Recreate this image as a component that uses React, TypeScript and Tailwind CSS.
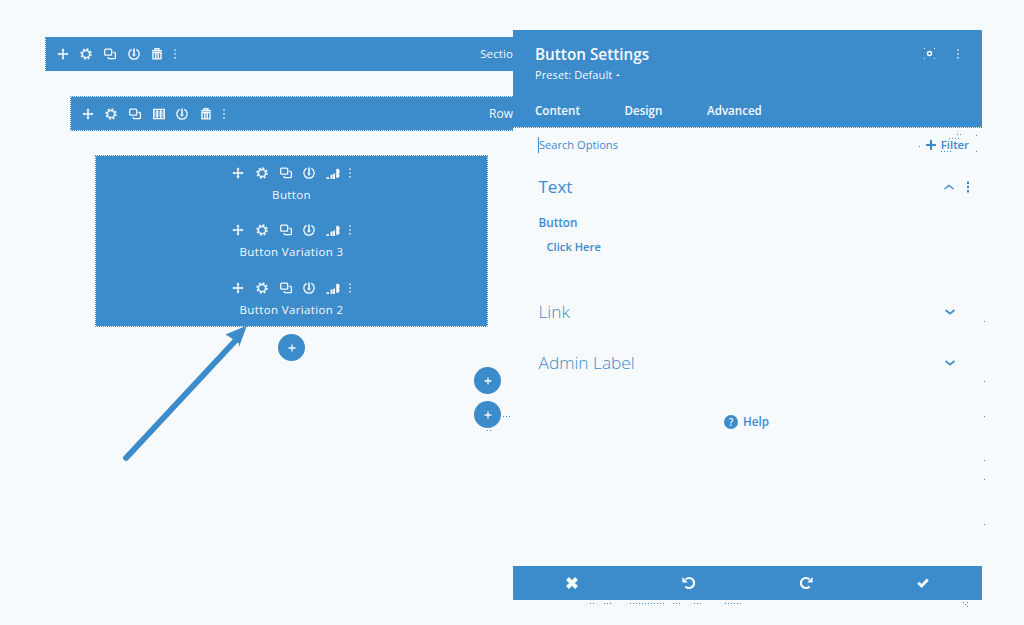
import React from "react";

type IconName = "move" | "gear" | "copy" | "columns" | "power" | "trash" | "bars" | "dots";

const shapes: Record<IconName, React.ReactNode> = {
  move: (
    <g fill="currentColor">
      <path d="M5.25 1.5h1.5v9h-1.5zM1.5 5.25h9v1.5h-9z" />
      <path d="M6 .3 7.6 2.6H4.4zM6 11.7 4.4 9.4h3.2zM.3 6 2.6 4.4v3.2zM11.7 6 9.4 7.6V4.4z" />
    </g>
  ),
  gear: (
    <g fill="none" stroke="currentColor">
      <circle cx="6" cy="6" r="3.6" strokeWidth="1.5" />
      <circle cx="6" cy="6" r="5" strokeWidth="1.5" strokeDasharray="1.96 1.96" />
    </g>
  ),
  copy: (
    <g fill="none" stroke="currentColor" strokeWidth="1.3">
      <rect x=".7" y="1.2" width="7" height="6" rx="1" />
      <path d="M9.2 4.4h1.2q1 0 1 1v4.3q0 1-1 1H5.2q-1 0-1-1v-.8" />
    </g>
  ),
  columns: (
    <g fill="none" stroke="currentColor" strokeWidth="1.4">
      <path d="M.7 1.4h10.6v9.2H.7zM4.2 1v10M7.8 1v10" />
      <path d="M1 4h10M1 6h10M1 8h10" strokeWidth=".8" />
    </g>
  ),
  power: (
    <g fill="none" stroke="currentColor" strokeWidth="1.3">
      <path d="M3.7 1.3A5.2 5.2 0 1 0 8.3 1.3" />
      <path d="M6 .6v7.6" strokeWidth="1.6" />
      <path d="M4.2 6.4 6 8.2l1.8-1.8" strokeWidth=".9" />
    </g>
  ),
  trash: (
    <g fill="none" stroke="currentColor" strokeWidth="1.4">
      <path d="M1 2.7h10M4 2.3V.8h4v1.5M2 4.6h8v6.3H2zM4.8 5v5.5M7.2 5v5.5" />
    </g>
  ),
  bars: (
    <g fill="currentColor">
      <path d="M-.5 10.2H2V12H-.5zM3.5 8l2-1v5h-2zM6 7.8l2-2V12H6zM9.2 2.4l1.2-.8 1.8.8.6 2.6-.9 1 .7 2.2-.9 2.6H9.2z" />
    </g>
  ),
  dots: (
    <g fill="currentColor">
      <path d="M5.3 1.5h1.4v1.6H5.3zM5.3 5.2h1.4v1.6H5.3zM5.3 8.9h1.4v1.6H5.3z" />
    </g>
  ),
};

function Icon({ name }: { name: IconName }) {
  return (
    <svg viewBox="0 0 12 12" className="h-3 w-3 shrink-0 overflow-visible">
      {shapes[name]}
    </svg>
  );
}

function Toolbar({ icons }: { icons: IconName[] }) {
  return (
    <div className="flex h-3 shrink-0 items-center">
      {icons.map((name) => (
        <span key={name} className={name === "dots" ? "flex w-3 justify-center" : "flex w-[23.6px] justify-center"}>
          <Icon name={name} />
        </span>
      ))}
    </div>
  );
}

function AddButton() {
  return (
    <button className="flex h-[27px] w-[27px] shrink-0 items-center justify-center rounded-full bg-[#3c8bcb] text-[#f6fafd]">
      <svg viewBox="0 0 8 8" className="h-2 w-2">
        <path d="M4 .5v7M.5 4h7" stroke="currentColor" strokeWidth="1.3" />
      </svg>
    </button>
  );
}

function Chevron({ up = false }: { up?: boolean }) {
  return (
    <svg viewBox="0 0 10 6" className={up ? "h-1.5 w-2.5 rotate-180" : "h-1.5 w-2.5"}>
      <path d="m.5 1 4.500 3.600L9.500 1" fill="none" stroke="currentColor" strokeWidth={up ? 1.3 : 1.8} />
    </svg>
  );
}

function Redo({ flip = false }: { flip?: boolean }) {
  return (
    <svg viewBox="0 0 14 14" className={flip ? "h-3.5 w-3.5 -scale-x-100" : "h-3.5 w-3.5"}>
      <path d="M10.6 10.4A5 5 0 1 1 10.4 3.4" fill="none" stroke="currentColor" strokeWidth="2.2" />
      <path d="M13.7 1v5.500H8.200z" fill="currentColor" />
    </svg>
  );
}

const modules = ["Button", "Button Variation 3", "Button Variation 2"];

function Builder() {
  return (
    <main className="flex w-[513px] shrink-0 flex-col overflow-hidden pt-[37px]">
      <div className="ml-[45px] flex h-[34px] shrink-0 items-center justify-between border-l border-dotted border-[#3c8bcb] bg-[#3c8bcb] bg-clip-padding pl-[5px] text-[#f6fafd]">
        <Toolbar icons={["move", "gear", "copy", "power", "trash", "dots"]} />
        <span className="text-[11.5px] leading-4 tracking-[0.1px]">Sectio</span>
      </div>
      <div className="mt-[25px] ml-[70px] flex h-[35px] shrink-0 items-center justify-between border-y border-l border-dotted border-[#3c8bcb] bg-[#3c8bcb] bg-clip-padding pl-[5px] text-[#f6fafd]">
        <Toolbar icons={["move", "gear", "copy", "columns", "power", "trash", "dots"]} />
        <span className="text-[12px] leading-4">Row</span>
      </div>
      <section className="mt-6 ml-[95px] flex h-[172px] w-[393px] shrink-0 flex-col items-center overflow-hidden rounded-[1px] border border-dotted border-[#3c8bcb] bg-[#3c8bcb] bg-clip-padding pt-[10.5px] text-[#f6fafd]">
        {modules.map((label) => (
          <div key={label} className="flex h-[57.5px] shrink-0 flex-col items-center">
            <Toolbar icons={["move", "gear", "copy", "power", "bars", "dots"]} />
            <span className="mt-2 text-[11.5px] leading-4 tracking-[0.36px]">{label}</span>
          </div>
        ))}
      </section>
      <div className="ml-[278px] flex pt-[7px]">
        <AddButton />
      </div>
      <div className="ml-[474px] flex flex-col gap-[7px] pt-1.5">
        <AddButton />
        <AddButton />
      </div>
    </main>
  );
}

function Settings() {
  return (
    <aside className="mt-[30px] flex h-[570px] w-[469px] flex-col text-[#3c8bcb]">
      <header className="h-[98px] shrink-0 rounded-tr-[1px] border-b border-dotted border-[#3c8bcb] bg-[#3c8bcb] bg-clip-padding pr-[18px] pl-[22px] text-[#f6fafd]">
        <div className="flex h-[47px] items-center justify-between">
          <h1 className="text-[15.3px] leading-5 font-semibold">Button Settings</h1>
          <div className="flex items-center gap-[17px]">
            <svg viewBox="0 0 11 11" className="h-[11px] w-[11px]">
              <circle cx="5.5" cy="5.5" r="2" fill="none" stroke="currentColor" strokeWidth="1.5" />
              <path d="M0 .5h1M10 .5h1M0 10.5h1M10 10.5h1" fill="none" stroke="currentColor" strokeWidth="1" />
            </svg>
            <Icon name="dots" />
          </div>
        </div>
        <p className="-mt-2.5 flex h-4 items-center gap-1 text-[11px] leading-4 tracking-[0.1px]">
          Preset: Default
          <svg viewBox="0 0 4 3" className="h-[3px] w-1">
            <path d="M0 2h4L2 0z" fill="currentColor" />
          </svg>
        </p>
        <nav className="mt-[18px] flex text-[11.6px] leading-5 font-semibold">
          <span className="w-[89.5px]">Content</span>
          <span className="w-[82.5px]">Design</span>
          <span>Advanced</span>
        </nav>
      </header>
      <div className="flex h-[34px] shrink-0 items-center justify-between pr-[13px] pl-[25px]">
        <span className="flex h-4 items-center border-l border-[#3c8bcb] text-[11.1px]">Search Options</span>
        <span className="flex items-center gap-[5px] text-[11.3px] font-semibold">
          <svg viewBox="0 0 10 10" className="h-2.5 w-2.5">
            <path d="M5 0v10M0 5h10" stroke="currentColor" strokeWidth="2" />
            <path d="M5 2.300 7.700 5 5 7.700 2.300 5z" fill="currentColor" />
          </svg>
          Filter
        </span>
      </div>
      <div className="-mt-px flex h-[52px] shrink-0 items-center justify-between pr-[8px] pl-[25.5px]">
        <h2 className="text-[17px]">Text</h2>
        <div className="flex items-center gap-2">
          <Chevron up />
          <svg viewBox="0 0 12 12" className="h-3 w-3">
            <path d="M5 .5h2v2.400H5zM5 4.800h2v2.400H5zM5 9.100h2v2.400H5z" fill="currentColor" />
          </svg>
        </div>
      </div>
      <div className="h-[73px] shrink-0 pl-[25.5px] text-[11.7px] font-semibold">
        <div className="h-[25px] leading-[18px]">Button</div>
        <div className="pl-2 text-[11.2px] leading-[18px]">Click Here</div>
      </div>
      {["Link", "Admin Label"].map((title) => (
        <div key={title} className="flex h-[51px] shrink-0 items-center justify-between pr-[27.5px] pl-[25.5px]">
          <h2 className="text-[17.3px] font-light">{title}</h2>
          <Chevron />
        </div>
      ))}
      <div className="mt-px flex h-[66px] shrink-0 items-center justify-center gap-[5px] pr-[2px] text-[11.7px] font-semibold">
        <span className="flex h-3.5 w-3.5 items-center justify-center rounded-full bg-[#3c8bcb] text-[10px] leading-none text-[#f6fafd]">?</span>
        Help
      </div>
      <footer className="mt-auto grid h-[34px] shrink-0 grid-cols-4 place-items-center rounded-b-[1px] bg-[#3c8bcb] text-[#f6fafd]">
        <svg viewBox="0 0 12 12" className="h-3 w-3">
          <path d="m1.500 1.500 9 9M10.500 1.500l-9 9" stroke="currentColor" strokeWidth="4" />
        </svg>
        <Redo flip />
        <Redo />
        <svg viewBox="0 0 12 10" className="h-2.5 w-3">
          <path d="m1.200 4.700 3.400 3.200 6.200-6.300" fill="none" stroke="currentColor" strokeWidth="2.900" />
        </svg>
      </footer>
    </aside>
  );
}

export default function App() {
  return (
    <div className="relative flex h-[625px] w-[1024px] overflow-hidden bg-[#f6fafd] font-['Open_Sans',sans-serif]">
      <Builder />
      <Settings />
      <svg viewBox="0 0 1024 625" className="pointer-events-none absolute inset-0 h-full w-full text-[#3c8bcb]">
        <path d="M126 458 236 340" fill="none" stroke="currentColor" strokeWidth="5.8" strokeLinecap="round" />
        <path d="M247 325.500 225.500 334.500l6.500 4 7 5L239 347z" fill="currentColor" />
        <g fill="none" stroke="currentColor" strokeWidth="1" shapeRendering="crispEdges">
          <path d="M503 416.500h8M590 603.500h4M604 603.500h8M630 603.500h36M673 603.500h8M694 603.500h8M725 603.500h16" strokeDasharray="1 2" />
          <path d="M984 321.500h1M984 381.500h1M984 416.500h1M984 460.500h1M984 479.500h1M984 524.500h1M919 146.500h1M976 135.500h1M976 151.500h1M487 430.500h1M490 430.500h1M963 602.500h1M965 604.500h1M967 602.500h1M967 606.500h1" />
          <path d="M957 134.500h5M949 138.500h12M941 151.500h12" strokeDasharray="1 2" />
        </g>
      </svg>
    </div>
  );
}
